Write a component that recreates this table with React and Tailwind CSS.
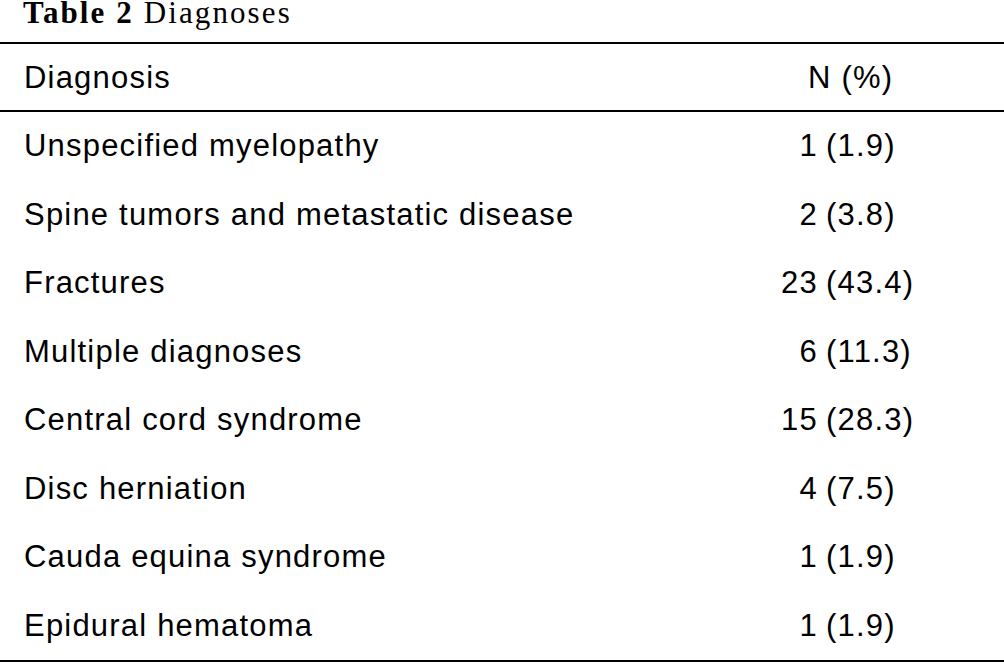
const rows = [
  ["Unspecified myelopathy", "1", "(1.9)"],
  ["Spine tumors and metastatic disease", "2", "(3.8)"],
  ["Fractures", "23", "(43.4)"],
  ["Multiple diagnoses", "6", "(11.3)"],
  ["Central cord syndrome", "15", "(28.3)"],
  ["Disc herniation", "4", "(7.5)"],
  ["Cauda equina syndrome", "1", "(1.9)"],
  ["Epidural hematoma", "1", "(1.9)"],
];

function Row({ label, n, pct }) {
  return (
    <div className="flex items-center h-[68.5px]">
      <div className="w-[760px] pl-[24px]">{label}</div>
      <div className="flex">
        <span className="w-[58px] text-right">{n}</span>
        <span className="pl-[8px]">{pct}</span>
      </div>
    </div>
  );
}

export default function App() {
  return (
    <div className="w-[1004px] h-[664px] bg-white text-black overflow-hidden">
      <div className="h-[25px] leading-[25px] pl-[23px] text-[31px] tracking-[2.1px] font-['Liberation_Serif',serif] whitespace-nowrap">
        <span className="font-bold">Table 2</span> Diagnoses
      </div>
      <div className="mt-[17px] border-t-2 border-b-2 border-black font-['Liberation_Sans',Arial,sans-serif] text-[31px] tracking-[1.2px] whitespace-nowrap">
        <div className="flex items-center h-[68px] pt-[2px] border-b-2 border-black">
          <div className="w-[760px] pl-[24px]">Diagnosis</div>
          <div className="pl-[48px]">N (%)</div>
        </div>
        {rows.map(([label, n, pct], i) => (
          <Row key={i} label={label} n={n} pct={pct} />
        ))}
      </div>
    </div>
  );
}
